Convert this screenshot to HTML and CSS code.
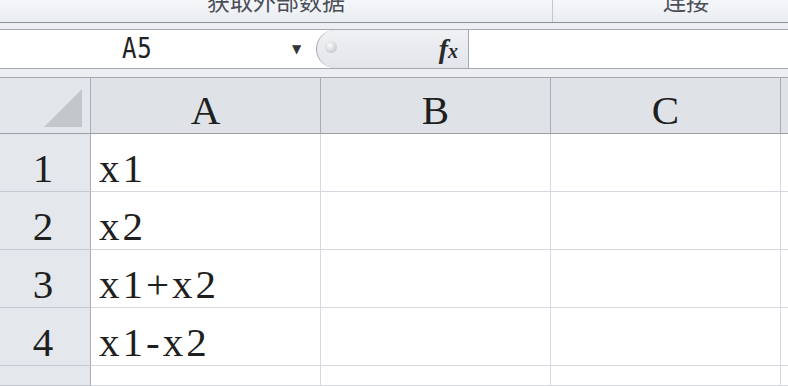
FILE: index.html
```html
<!DOCTYPE html>
<html lang="zh-CN">
<head>
    <meta charset="UTF-8">
    <title>Sheet</title>
    <link rel="stylesheet" href="styles.css">
</head>
<body>
    <div class="ribbon">
        <div class="group group-wide"><span class="group-label">获取外部数据</span></div>
        <div class="group group-narrow"><span class="group-label">连接</span></div>
    </div>
    <div class="band"></div>
    <div class="formula-bar">
        <div class="name-box">
            <span class="name-text">A5</span>
            <span class="drop">&#9660;</span>
        </div>
        <div class="fx-box">
            <span class="knob"></span>
            <span class="fx"><span class="fx-f">f</span><span class="fx-x">x</span></span>
        </div>
        <div class="formula-input"></div>
    </div>
    <div class="band band-low"></div>
    <div class="sheet">
        <div class="corner"><span class="corner-tri"></span></div>
        <div class="col-head">A</div>
        <div class="col-head">B</div>
        <div class="col-head">C</div>
        <div class="col-head col-rest"></div>

        <div class="row-head">1</div>
        <div class="cell">x1</div>
        <div class="cell"></div>
        <div class="cell"></div>
        <div class="cell"></div>

        <div class="row-head">2</div>
        <div class="cell">x2</div>
        <div class="cell"></div>
        <div class="cell"></div>
        <div class="cell"></div>

        <div class="row-head">3</div>
        <div class="cell">x1+x2</div>
        <div class="cell"></div>
        <div class="cell"></div>
        <div class="cell"></div>

        <div class="row-head">4</div>
        <div class="cell">x1-x2</div>
        <div class="cell"></div>
        <div class="cell"></div>
        <div class="cell"></div>

        <div class="row-head"></div>
        <div class="cell"></div>
        <div class="cell"></div>
        <div class="cell"></div>
        <div class="cell"></div>
    </div>
</body>
</html>
```

FILE: styles.css
```css
* {
    box-sizing: border-box;
}
body {
    margin: 0;
    width: 788px;
    height: 386px;
    overflow: hidden;
    background: #ffffff;
    font-family: "Liberation Serif", serif;
}
.ribbon {
    display: flex;
    height: 23px;
    overflow: hidden;
    background: linear-gradient(#f5f7fa, #e9ecf0);
    border-bottom: 1px solid #8d939b;
}
.group {
    flex: none;
    text-align: center;
    overflow: hidden;
}
.group-wide {
    width: 553px;
    border-right: 1px solid #c3c8cf;
}
.group-narrow {
    width: 266px;
}
.group-label {
    display: block;
    margin-top: -12px;
    font-family: "Noto Sans CJK SC", sans-serif;
    font-size: 23px;
    line-height: 24px;
    color: #4a4f57;
}
.band {
    height: 7px;
    background: #eceef2;
    border-bottom: 1px solid #a4a9b1;
}
.band-low {
    height: 10px;
    border-top: 1px solid #a4a9b1;
    border-bottom: 1px solid #a4a9b1;
}
.formula-bar {
    display: flex;
    height: 38px;
    background: #ffffff;
}
.name-box {
    width: 316px;
    display: flex;
    align-items: center;
    padding-left: 122px;
}
.name-text {
    width: 34px;
    font-family: "DejaVu Sans Mono", monospace;
    font-size: 28px;
    line-height: 1;
    color: #222;
    transform: scaleX(0.86);
    transform-origin: left center;
    letter-spacing: 1px;
}
.drop {
    margin-left: 136px;
    font-size: 12px;
    color: #333;
    font-family: "DejaVu Sans", sans-serif;
}
.fx-box {
    width: 153px;
    display: flex;
    align-items: center;
    justify-content: space-between;
    padding: 0 10px 0 8px;
    background: linear-gradient(#eff1f4, #e2e5ea);
    border: 1px solid #a4a9b1;
    border-top: none;
    border-bottom: none;
    border-radius: 19px 0 0 19px;
}
.knob {
    width: 12px;
    height: 12px;
    margin-top: -4px;
    border-radius: 50%;
    background: radial-gradient(circle at 40% 35%, #fdfdfd, #b4b8be);
}
.fx {
    font-family: "Liberation Serif", serif;
    font-style: italic;
    font-weight: bold;
    color: #2a2a2a;
}
.fx-f {
    font-size: 28px;
}
.fx-x {
    font-size: 20px;
}
.formula-input {
    flex: 1;
    background: #ffffff;
}
.sheet {
    display: grid;
    grid-template-columns: 91px 230px 230px 230px 1fr;
    grid-template-rows: 56px repeat(4, 58px) 20px;
    font-size: 41px;
    color: #1f1f1f;
}
.corner {
    background: #e3e6ea;
    border-right: 1px solid #a9aeb5;
    border-bottom: 1px solid #9aa0a8;
    display: flex;
    justify-content: flex-end;
    align-items: flex-end;
    padding: 0 8px 6px 0;
}
.corner-tri {
    width: 38px;
    height: 38px;
    background: #c3c7cc;
    clip-path: polygon(100% 0, 100% 100%, 0 100%);
}
.col-head {
    background: #dfe3e8;
    border-right: 1px solid #a9aeb5;
    border-bottom: 1px solid #9aa0a8;
    display: flex;
    justify-content: center;
    align-items: flex-end;
    line-height: 1;
    padding-bottom: 2px;
}
.col-rest {
    border-right: none;
}
.row-head {
    background: #e4e7eb;
    border-right: 1px solid #a9aeb5;
    border-bottom: 1px solid #c6cad0;
    display: flex;
    justify-content: center;
    align-items: flex-end;
    line-height: 1;
    padding: 0 4px 2px 0;
}
.cell {
    border-right: 1px solid #d5d9df;
    border-bottom: 1px solid #d5d9df;
    display: flex;
    align-items: flex-end;
    line-height: 1;
    padding: 0 0 2px 8px;
    letter-spacing: 3px;
    white-space: nowrap;
}
```
